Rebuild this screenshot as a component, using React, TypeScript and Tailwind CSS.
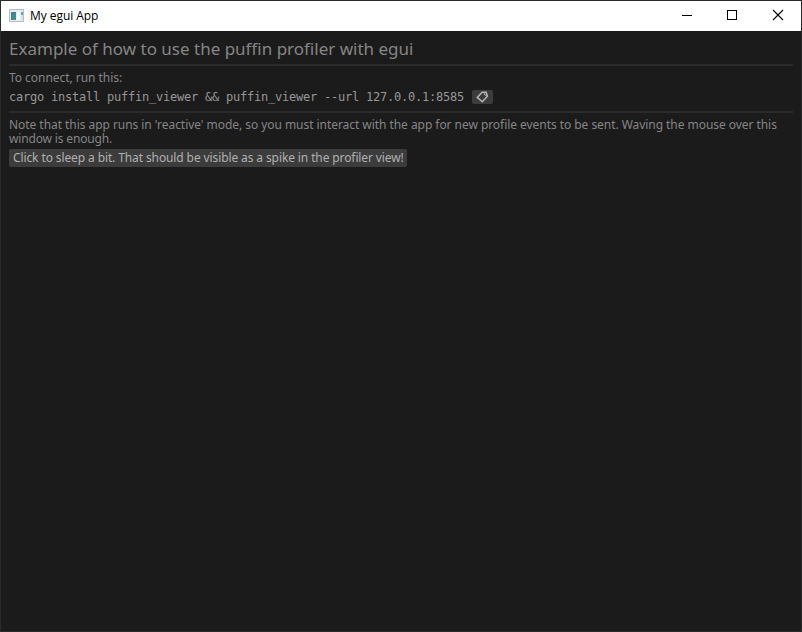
import React from "react";

const UI = "font-['Noto_Sans','Open_Sans',sans-serif] font-normal whitespace-nowrap";

function AppIcon() {
  return (
    <svg width="15" height="13" viewBox="0 0 15 13" shapeRendering="crispEdges">
      <rect width="15" height="13" fill="#b9bcc0" />
      <rect x="1" y="1" width="13" height="11" fill="#e9ecef" />
      <rect x="2" y="3" width="5" height="8" fill="#4379a0" />
      <rect x="3" y="5" width="4" height="6" fill="#3f9087" />
      <rect x="8" y="3" width="3" height="8" fill="#f8f9fb" />
      <rect x="12" y="3" width="2" height="3" fill="#6e9fc0" />
      <rect x="12" y="6" width="2" height="5" fill="#d5e3e6" />
    </svg>
  );
}

function TitleBar() {
  return (
    <header className="flex h-[30px] shrink-0 items-center bg-white text-black">
      <div className="ml-2 mb-[1px]">
        <AppIcon />
      </div>
      <span className="ml-1.5 grow whitespace-nowrap font-['Open_Sans',sans-serif] text-[12px] leading-4 tracking-[-0.05px]">
        My egui App
      </span>
      <svg width="137" height="30" fill="none" stroke="#000" shapeRendering="crispEdges">
        <path d="M18 14.5h10" />
        <path d="M63.5 9.5h9v9h-9z" />
        <path d="M109 9l10 10M119 9l-10 10" shapeRendering="auto" strokeWidth="1.1" />
      </svg>
    </header>
  );
}

export default function App() {
  return (
    <div className="flex h-[632px] w-[802px] flex-col border border-[#2b2b2d] bg-[#1b1b1b] text-[#858585]">
      <TitleBar />
      <main className="flex flex-col items-start px-2">
        <h1 className={`${UI} mt-[7px] h-[22px] text-[17px] leading-[22px]`}>
          Example of how to use the puffin profiler with egui
        </h1>
        <hr className="mt-[4px] h-[2px] w-full border-0 bg-[#2b2b2b]" />
        <p className={`${UI} mt-[5px] h-[14px] text-[12px] leading-[14px] tracking-[-0.04px]`}>To connect, run this:</p>
        <div className="mt-[4px] flex h-[16px] items-center">
          <code className="w-[463px] whitespace-pre font-['DejaVu_Sans_Mono',monospace] text-[12px] leading-[14px] tracking-[-0.224px] text-[#979797]">
            cargo install puffin_viewer &amp;&amp; puffin_viewer --url 127.0.0.1:8585
          </code>
          <button className="flex h-[14px] w-[21px] items-center justify-center rounded-[2px] bg-[#3c3c3c]">
            <svg width="13" height="12" viewBox="0 0 13 12" fill="none" stroke="#b4b4b4" strokeWidth="1.5">
              <path d="M1.2 6.4L6.2 1.2L10.2 1.2L11.4 5.2L6.3 10.8Z" />
              <path d="M8 1.2L8.6 3.8L11.2 4.6" strokeWidth="1" />
            </svg>
          </button>
        </div>
        <hr className="mt-[6px] h-[2px] w-full border-0 bg-[#2b2b2b]" />
        <p className={`${UI} mt-[5px] h-[28px] text-[12px] leading-[14px] tracking-[-0.05px]`}>
          Note that this app runs in 'reactive' mode, so you must interact with the app for new profile events to be sent. Waving the mouse over this
          <br />
          <span className="tracking-[-0.15px]">window is enough.</span>
        </p>
        <button className={`${UI} mt-[3px] h-[18px] w-[398px] rounded-[2px] bg-[#3c3c3c] px-1 text-left text-[12px] leading-[18px] tracking-[-0.11px] text-[#b0b0b0]`}>
          Click to sleep a bit. That should be visible as a spike in the profiler view!
        </button>
      </main>
    </div>
  );
}
